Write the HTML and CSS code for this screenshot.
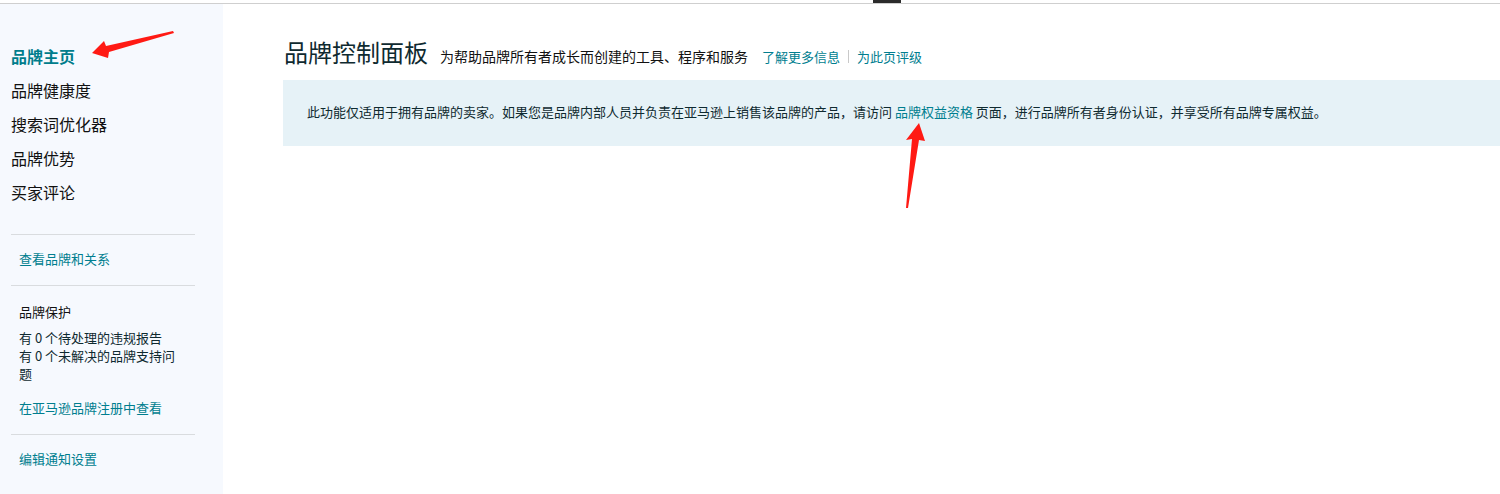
FILE: index.html
```html
<!DOCTYPE html>
<html lang="zh-CN">
<head>
<meta charset="utf-8">
<title>品牌控制面板</title>
<link rel="stylesheet" href="styles.css">
</head>
<body>
<div class="topbar"><div class="tab"></div></div>
<div class="layout">
  <aside class="sidebar">
    <ul class="menu">
      <li class="active">品牌主页</li>
      <li>品牌健康度</li>
      <li>搜索词优化器</li>
      <li>品牌优势</li>
      <li>买家评论</li>
    </ul>
    <div class="section"><a class="link">查看品牌和关系</a></div>
    <div class="section">
      <div class="sec-title">品牌保护</div>
      <p class="sec-text">有 0 个待处理的违规报告<br>有 0 个未解决的品牌支持问题</p>
      <a class="link">在亚马逊品牌注册中查看</a>
    </div>
    <div class="section"><a class="link">编辑通知设置</a></div>
  </aside>
  <main class="main">
    <div class="head">
      <h1 class="title">品牌控制面板</h1>
      <span class="subtitle">为帮助品牌所有者成长而创建的工具、程序和服务</span>
      <a class="link hlink">了解更多信息</a>
      <span class="sep"></span>
      <a class="link">为此页评级</a>
    </div>
    <div class="banner">此功能仅适用于拥有品牌的卖家。如果您是品牌内部人员并负责在亚马逊上销售该品牌的产品，请访问 <a class="link">品牌权益资格</a> 页面，进行品牌所有者身份认证，并享受所有品牌专属权益。</div>
  </main>
</div>
<svg class="annot" width="1500" height="494" viewBox="0 0 1500 494">
  <polygon fill="#ff1a14" points="92,53 104,41 106,46 173,31 174,33 109,52 108,58"/>
  <polygon fill="#ff1a14" points="919,123 925,141 919,140 908,208 906,208 912,139 906,140"/>
</svg>
</body>
</html>
```

FILE: styles.css
```css
* { box-sizing: border-box; }
html, body { margin: 0; padding: 0; background: #fff; }
body {
  width: 1500px;
  height: 494px;
  overflow: hidden;
  position: relative;
  font-family: "Noto Sans CJK SC", "Liberation Sans", sans-serif;
  color: #0f2a30;
}
.topbar {
  height: 4px;
  border-bottom: 1px solid #cfcfcf;
  display: flex;
}
.tab {
  margin-left: 873px;
  width: 28px;
  height: 3px;
  background: #2b2b2b;
}
.layout {
  display: flex;
  height: 490px;
}
.sidebar {
  width: 223px;
  flex: none;
  background: #f6f9fe;
  padding: 35px 28px 0 11px;
}
.menu {
  list-style: none;
  margin: 0 0 25px;
  padding: 0;
  font-size: 16px;
  line-height: 34px;
  color: #111;
}
.menu .active { color: #007d8c; font-weight: bold; }
.section {
  border-top: 1px solid #d9dcdf;
  padding: 15px 0 17px 8px;
  font-size: 13px;
  line-height: 18px;
}
.section + .section { padding-top: 17px; }
.section:last-child { padding-top: 15px; }
.sec-title { color: #111; margin-bottom: 8px; }
.sec-text { margin: 0 0 16px; width: 168px; color: #0f2a30; }
.link { color: #007e8f; text-decoration: none; }
.main {
  flex: 1;
  padding: 32px 0 0 60px;
}
.head {
  display: flex;
  align-items: baseline;
  height: 44px;
}
.title {
  margin: 0 12px 0 1px;
  font-size: 24px;
  font-weight: normal;
  line-height: 32px;
  color: #0f2a30;
}
.subtitle { font-size: 14px; color: #111; }
.head .link { font-size: 13px; }
.hlink { margin-left: 14px; }
.sep {
  width: 1px;
  height: 13px;
  background: #c9c9c9;
  margin: 0 8px;
  align-self: center;
  position: relative;
  top: -2px;
}
.banner {
  background: #e6f2f7;
  height: 66px;
  padding: 23px 24px 0;
  font-size: 13px;
  line-height: 18px;
  color: #0f2a30;
}
.annot {
  position: absolute;
  left: 0;
  top: 0;
  pointer-events: none;
}
```
